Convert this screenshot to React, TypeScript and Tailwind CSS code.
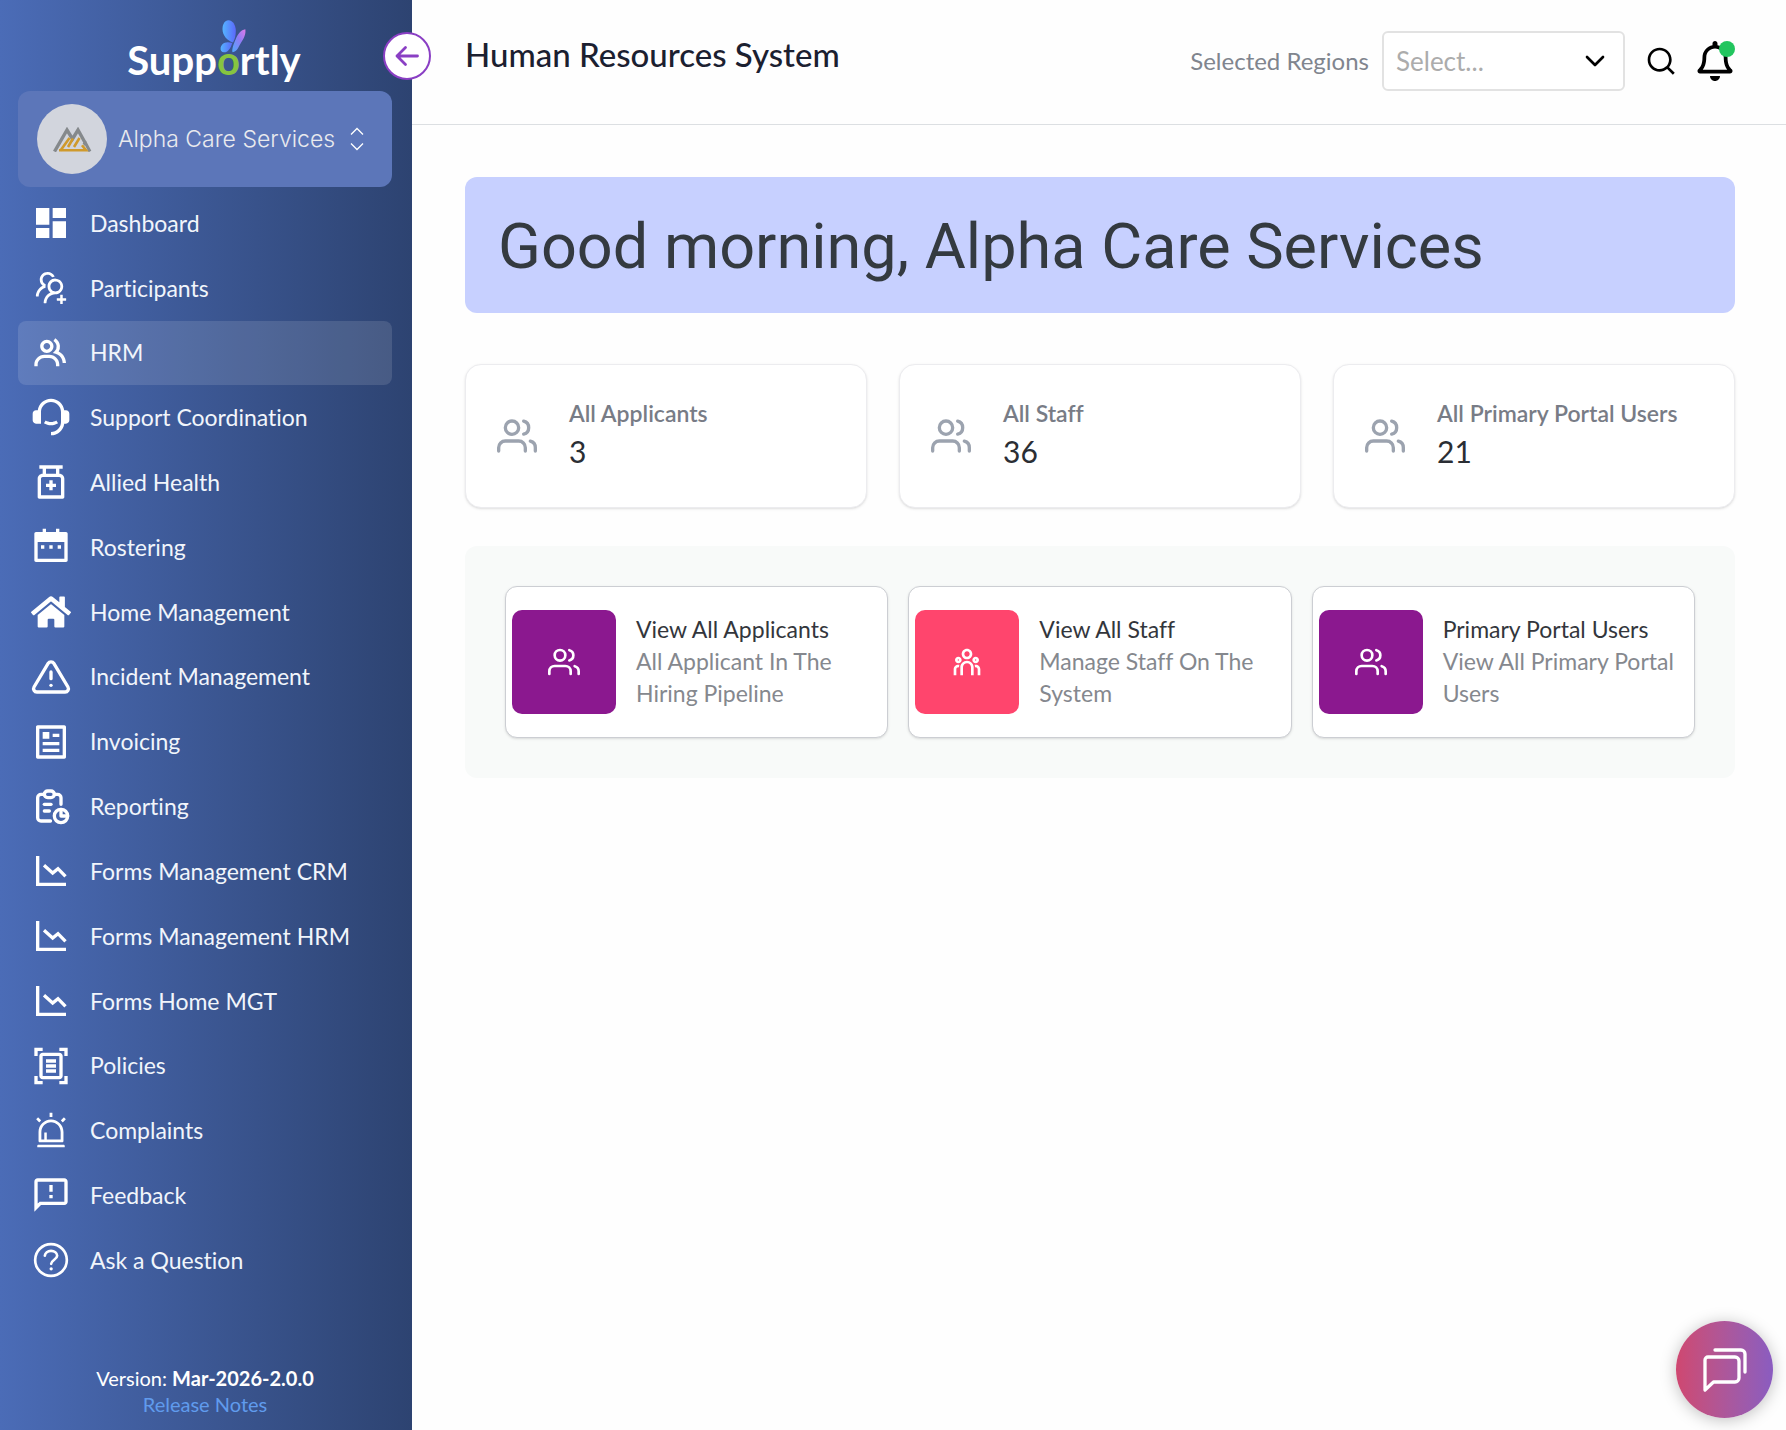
import React from "react";
import type { IconType } from "react-icons";
import { MdDashboard, MdOutlineDocumentScanner, MdOutlineFeedback } from "react-icons/md";
import { AiOutlineUsergroupAdd, AiOutlineAlert } from "react-icons/ai";
import { BiGroup } from "react-icons/bi";
import {
  RiCustomerService2Fill,
  RiMedicineBottleLine,
  RiCalendar2Fill,
  RiArticleLine,
  RiSearchLine,
  RiTeamLine,
} from "react-icons/ri";
import { FaHome, FaRegBell } from "react-icons/fa";
import { FiAlertTriangle, FiUsers, FiChevronDown } from "react-icons/fi";
import { TbReport } from "react-icons/tb";

function ChartDown({ className }: { className?: string }) {
  return (
    <svg viewBox="0 0 24 24" className={className} fill="none" stroke="currentColor" strokeWidth="2" aria-hidden="true">
      <path d="M4 3v17h17" />
      <path d="M7.8 8.6 13 13.2l3.2-2.6 4.5 4.6" />
    </svg>
  );
}

function Question({ className }: { className?: string }) {
  return (
    <svg viewBox="0 0 24 24" className={className} fill="none" stroke="currentColor" strokeWidth="1.6" strokeLinecap="round" aria-hidden="true">
      <circle cx="12" cy="12" r="9.5" />
      <path d="M8.3 9.4c.2-1.7 1.700-2.900 3.700-2.900s3.700 1.200 3.700 3c0 2.200-3.600 2.500-3.600 4.800" />
      <circle cx="12.1" cy="17.300" r="0.500" fill="currentColor" strokeWidth="1" />
    </svg>
  );
}

type Icon = IconType | React.FC<{ className?: string }>;

const navItems: { label: string; icon: Icon; active?: boolean }[] = [
  { label: "Dashboard", icon: MdDashboard },
  { label: "Participants", icon: AiOutlineUsergroupAdd },
  { label: "HRM", icon: BiGroup, active: true },
  { label: "Support Coordination", icon: RiCustomerService2Fill },
  { label: "Allied Health", icon: RiMedicineBottleLine },
  { label: "Rostering", icon: RiCalendar2Fill },
  { label: "Home Management", icon: FaHome },
  { label: "Incident Management", icon: FiAlertTriangle },
  { label: "Invoicing", icon: RiArticleLine },
  { label: "Reporting", icon: TbReport },
  { label: "Forms Management CRM", icon: ChartDown },
  { label: "Forms Management HRM", icon: ChartDown },
  { label: "Forms Home MGT", icon: ChartDown },
  { label: "Policies", icon: MdOutlineDocumentScanner },
  { label: "Complaints", icon: AiOutlineAlert },
  { label: "Feedback", icon: MdOutlineFeedback },
  { label: "Ask a Question", icon: Question },
];

const stats = [
  { label: "All Applicants", value: 3 },
  { label: "All Staff", value: 36 },
  { label: "All Primary Portal Users", value: 21 },
];

const links = [
  { title: "View All Applicants", text: "All Applicant In The Hiring Pipeline", icon: FiUsers, tile: "bg-[#8b188f]" },
  { title: "View All Staff", text: "Manage Staff On The System", icon: RiTeamLine, tile: "bg-[#ff456d]" },
  { title: "Primary Portal Users", text: "View All Primary Portal Users", icon: FiUsers, tile: "bg-[#8b188f]" },
];

function Butterfly() {
  return (
    <svg viewBox="0 0 27 33" className="absolute -top-4 left-[3px] h-[33px] w-[27px]" aria-hidden="true">
      <defs>
        <linearGradient id="wing" x1="0" y1="0" x2="1" y2="0">
          <stop offset="0" stopColor="#55b4ff" />
          <stop offset="1" stopColor="#5b68fb" />
        </linearGradient>
        <linearGradient id="wing2" x1="0" y1="1" x2="1" y2="0">
          <stop offset="0" stopColor="#4ea9ff" />
          <stop offset="0.55" stopColor="#8f7cf5" />
          <stop offset="1" stopColor="#e07be8" />
        </linearGradient>
      </defs>
      <path d="M2.5 9C2.5 4 5 0 8.500 .2c4.500.3 7.300 5 7.300 10.800 0 4.500-.9 8-2.800 11.500C7.500 20.500 2.500 16 2.500 9z" fill="url(#wing)" />
      <path d="M12.300 23C10.500 29 7.500 32.500 4 32.300 1.500 32.200.3 30.500.6 28c.5-4 4.500-7.500 11.700-5z" fill="url(#wing)" />
      <path d="M12.500 32.200c-.8-3 1-8 3.200-13C17.800 14 21 9.800 25.300 9.200c.9 5-1.800 10-4.300 13.500-2.500 3.800-3.500 8.800-8.500 9.500z" fill="url(#wing2)" />
    </svg>
  );
}

function OrgLogo() {
  return (
    <svg viewBox="0 0 39 25" className="h-[25px] w-[39px]" fill="none" aria-hidden="true">
      <path d="M1.500 24.500 14 3l5.500 9L25 3l7 12.500" stroke="#85898c" strokeWidth="3.400" />
      <path d="M30.500 17.500l2-1.500 4.500 8.500" stroke="#85898c" strokeWidth="3" />
      <path d="M7.500 23.500 16.500 11M15 20l5-8.500M21 20l5.500-9" stroke="#cf9a2c" strokeWidth="2.600" />
      <path d="M6 23.200h27l-4-5" stroke="#cf9a2c" strokeWidth="2.600" />
    </svg>
  );
}

function Sidebar() {
  return (
    <aside className="relative flex w-[412px] shrink-0 flex-col bg-linear-to-r from-[#4b6cb7] to-[#2d4371] pr-5 pl-[18px] text-white">
      <div className="flex h-[91px] items-end justify-center pb-[7px] pl-[18px] text-[40px] leading-[48px] font-bold">
        <span>Supp</span>
        <span className="relative text-[#86c440]">
          o
          <Butterfly />
        </span>
        <span>rtly</span>
      </div>

      <button type="button" aria-label="Collapse sidebar" className="absolute top-8 -right-[19px] z-10 flex size-12 items-center justify-center rounded-full border-2 border-[#8a3fc4] bg-white text-[#8a3fc4]">
        <svg viewBox="0 0 24 24" className="size-6" fill="none" stroke="currentColor" strokeWidth="2.800" strokeLinecap="round" strokeLinejoin="round" aria-hidden="true">
          <path d="M22.500 12H2M10.500 3.500 2 12l8.500 8.500" />
        </svg>
      </button>

      <button type="button" className="flex h-24 w-full items-center rounded-xl bg-[#5c76b9] pr-7 pl-[19px] text-left">
        <span className="flex size-[70px] shrink-0 items-center justify-center rounded-full bg-[#d2d5dd]">
          <OrgLogo />
        </span>
        <span className="ml-[11px] flex-1 font-['Inter'] text-[23px] font-light whitespace-nowrap text-[#e9eaee]">Alpha Care Services</span>
        <svg viewBox="0 0 14 24" className="h-6 w-[14px]" fill="none" stroke="#fff" strokeWidth="1.300" aria-hidden="true">
          <path d="M1 7.500 7 1.500l6 6M1 16.500l6 6 6-6" />
        </svg>
      </button>

      <nav className="mt-1 flex flex-1 flex-col justify-between">
        {navItems.map(({ label, icon: ItemIcon, active }) => (
          <a
            key={label}
            href="#"
            aria-current={active ? "page" : undefined}
            className={
              active
                ? "flex h-16 items-center gap-[19px] rounded-lg bg-white/12 pl-[13px] text-[23px] text-[#f1f5fb]"
                : "flex h-16 items-center gap-[19px] rounded-lg pl-[13px] text-[23px] text-[#f1f5fb]"
            }
          >
            <ItemIcon className="size-10 shrink-0 text-white" />
            <span className="whitespace-nowrap">{label}</span>
          </a>
        ))}
      </nav>

      <div className="pt-[73px] pb-[13px] text-center text-[20px] leading-[26px]">
        <p>
          Version: <strong className="font-bold">Mar-2026-2.0.0</strong>
        </p>
        <a href="#" className="text-[#609bed]">Release Notes</a>
      </div>
    </aside>
  );
}

function Header() {
  return (
    <header className="flex h-[125px] items-start justify-between border-b border-[#dcdfe2] pr-[51px] pl-[53px]">
      <h1 className="mt-[34px] text-[33px] leading-10 font-medium whitespace-nowrap text-[#1b2030]">Human Resources System</h1>
      <div className="mt-[31px] flex items-center">
        <label htmlFor="regions" className="mr-[13px] text-[24px] whitespace-nowrap text-[#80858e]">Selected Regions</label>
        <div className="relative">
          <select id="regions" defaultValue="" className="h-[60px] w-[243px] appearance-none rounded-md border-2 border-[#e2e2e2] bg-white pl-3 text-[26px] text-[#acacac]">
            <option value="">Select...</option>
          </select>
          <FiChevronDown className="pointer-events-none absolute top-[14px] right-[14px] size-8 text-black" />
        </div>
        <button type="button" aria-label="Search" className="ml-5 text-black">
          <RiSearchLine className="size-8" />
        </button>
        <button type="button" aria-label="Notifications" className="relative ml-[18px] text-black">
          <FaRegBell className="size-10" />
          <span className="absolute top-0 right-0 size-4 rounded-full bg-[#22c55e]" />
        </button>
      </div>
    </header>
  );
}

export default function App() {
  return (
    <div className="flex min-h-screen bg-[#fefefe] font-['Lato',sans-serif] [font-variant-ligatures:none]">
      <Sidebar />
      <div className="min-w-0 flex-1">
        <Header />
        <main className="pt-[52px] pr-[51px] pl-[53px]">
          <section className="rounded-xl bg-[#c7d0ff] px-[33px] pt-[34px] pb-[30px]">
            <h2 className="font-['Roboto',sans-serif] text-[63px] leading-[72px] text-[#343a40]">Good morning, Alpha Care Services</h2>
          </section>

          <section className="mt-[51px] grid grid-cols-3 gap-8">
            {stats.map((s) => (
              <article key={s.label} className="flex h-36 items-center rounded-2xl border border-[#ececef] bg-white pl-[31px] shadow-sm">
                <FiUsers className="size-10 shrink-0 text-[#9ca3af]" />
                <div className="ml-8 pb-[6px]">
                  <h3 className="text-[23px] leading-9 font-semibold whitespace-nowrap text-[#787c86]">{s.label}</h3>
                  <p className="text-[30px] leading-10 text-[#2b2e34]">{s.value}</p>
                </div>
              </article>
            ))}
          </section>

          <section className="mt-[38px] grid grid-cols-3 gap-5 rounded-xl bg-[#f8faf9] p-10">
            {links.map(({ title, text, icon: LinkIcon, tile }) => (
              <a key={title} href="#" className="flex items-center rounded-xl border border-[#ccced3] bg-white py-[23px] pl-[6px] shadow-sm">
                <span className={`flex size-[104px] shrink-0 items-center justify-center rounded-[10px] text-white ${tile}`}>
                  <LinkIcon className="size-8" />
                </span>
                <span className="ml-5 pb-[2px] text-[23px] leading-8">
                  <span className="block text-[#33363c]">{title}</span>
                  <span className="block text-[#85888e]">{text}</span>
                </span>
              </a>
            ))}
          </section>
        </main>
      </div>

      <button type="button" aria-label="Open chat" className="fixed right-[13px] bottom-3 flex size-[97px] items-center justify-center rounded-full bg-linear-to-r from-[#cf4770] to-[#8a5cc0] text-white shadow-[0_2px_16px_rgba(0,0,0,0.25)]">
        <svg viewBox="0 0 44 44" className="size-11" fill="none" stroke="currentColor" strokeWidth="3.300" strokeLinecap="round" strokeLinejoin="round" aria-hidden="true">
          <path d="M5 9h27a4 4 0 0 1 4 4v17a4 4 0 0 1-4 4H10.500L2 42V12a3 3 0 0 1 3-3z" />
          <path d="M12 2h26a4 4 0 0 1 4 4v18" />
        </svg>
      </button>
    </div>
  );
}
